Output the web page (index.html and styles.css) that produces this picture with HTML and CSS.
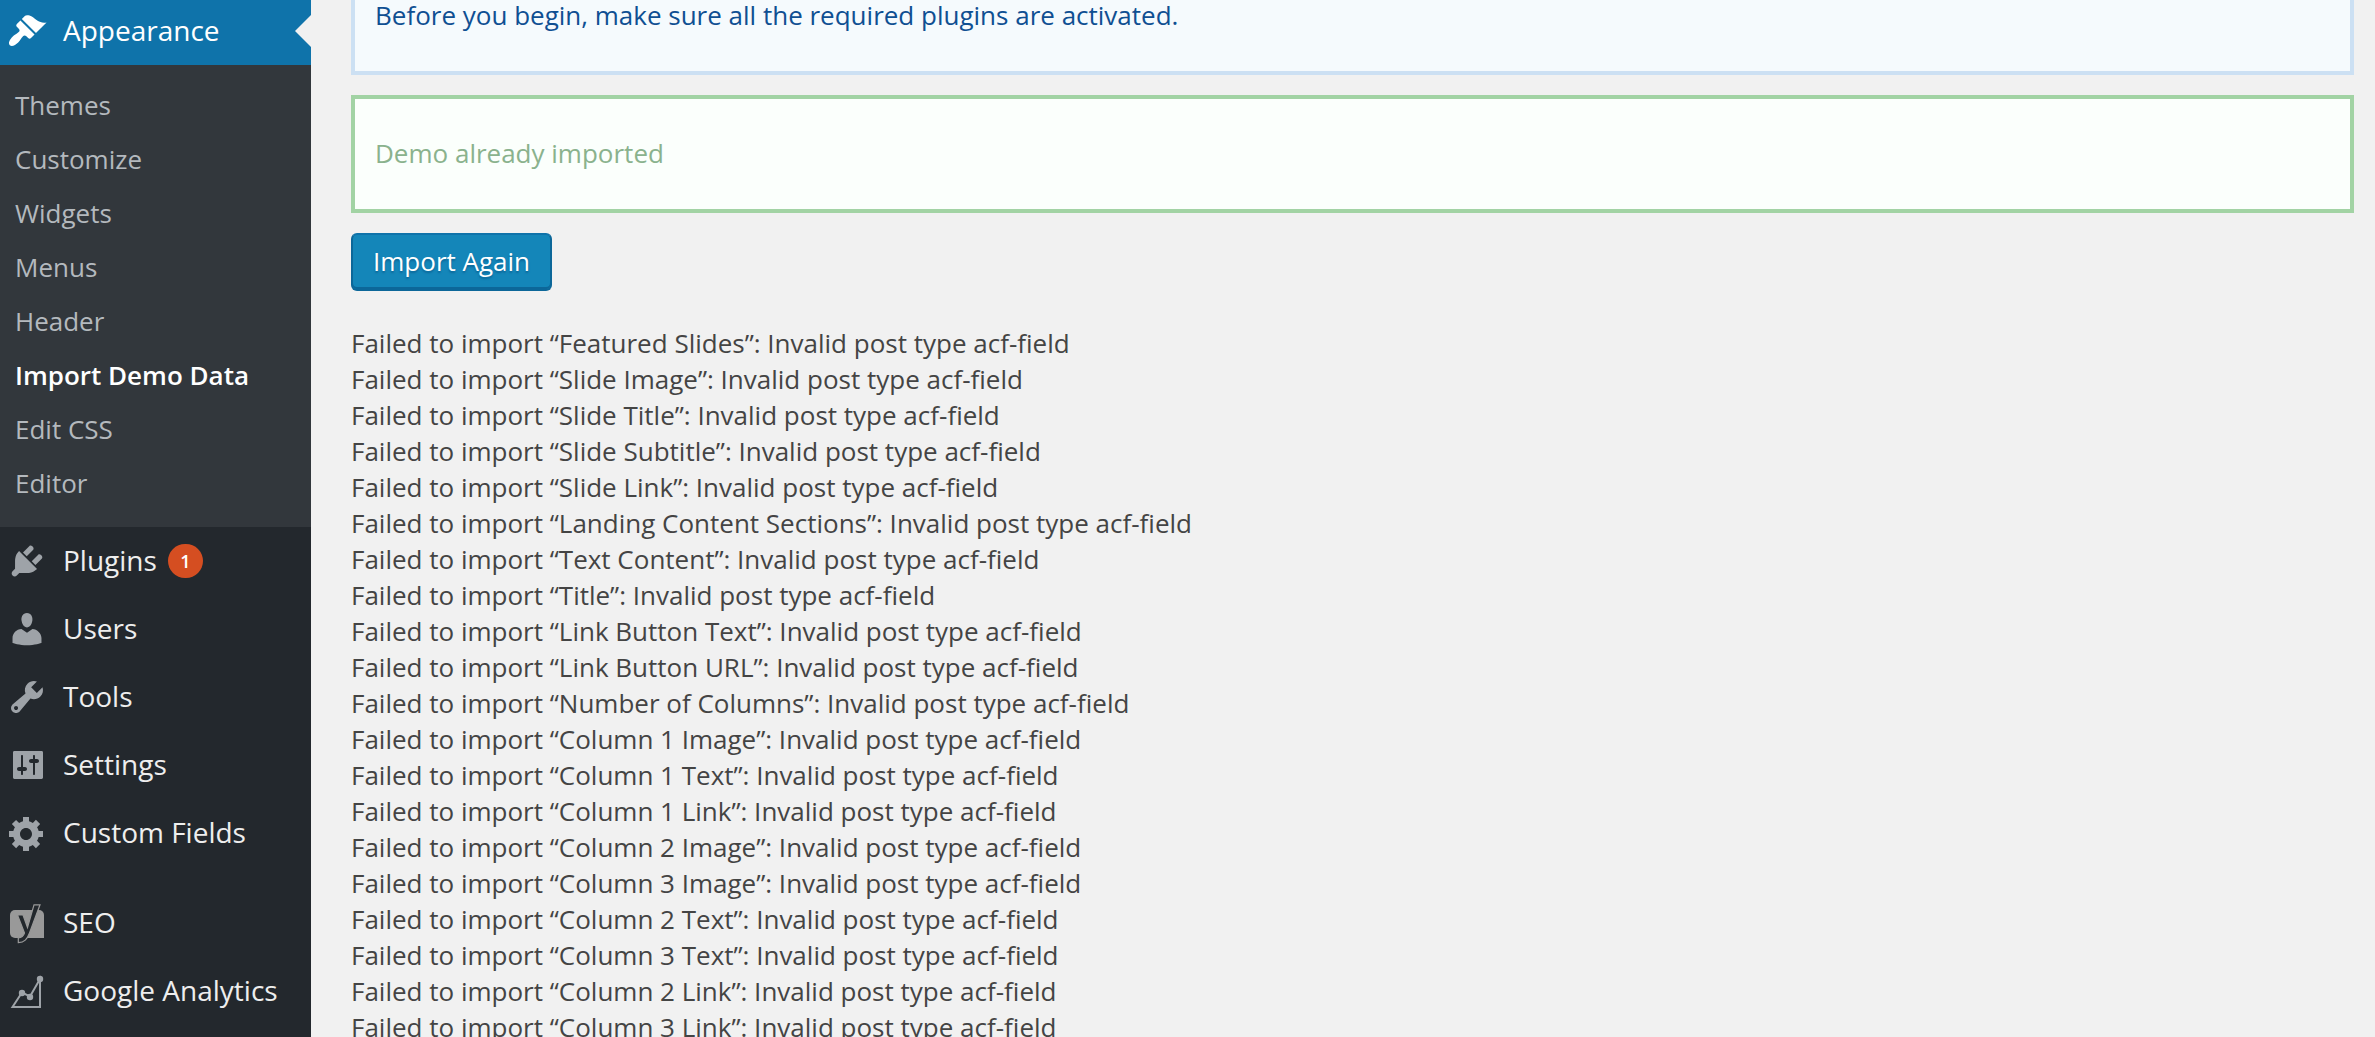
FILE: index.html
```html
<!DOCTYPE html>
<html lang="en">
<head>
<meta charset="utf-8">
<title>Import Demo Data</title>
<link rel="stylesheet" href="styles.css">
</head>
<body>
<div class="shell">
  <nav class="sidebar" aria-label="Main menu">
    <a class="menu-item menu-item-current" href="#">
      <svg class="icon" viewBox="0 0 20 20" aria-hidden="true"><path d="M14.48 11.06L7.41 3.99l1.5-1.5c.5-.56 2.3-.47 3.51.32 1.21.8 1.43 1.28 2.91 2.1 1.18.64 2.45 1.26 4.45.85zm-.71.71L6.7 4.7 4.93 6.47c-.39.39-.39 1.02 0 1.41l1.06 1.06c.39.39.39 1.03 0 1.42-.6.6-1.43 1.11-2.21 1.69-.35.26-.7.53-1.01.84C1.43 14.23.4 16.08 1.4 17.07c.99 1 2.84-.03 4.18-1.36.31-.31.58-.66.85-1.02.57-.78 1.08-1.61 1.69-2.21.39-.39 1.02-.39 1.41 0l1.06 1.06c.39.39 1.02.39 1.41 0z"/></svg>
      <span class="menu-label">Appearance</span>
    </a>
    <ul class="submenu">
      <li><a href="#">Themes</a></li>
      <li><a href="#">Customize</a></li>
      <li><a href="#">Widgets</a></li>
      <li><a href="#">Menus</a></li>
      <li><a href="#">Header</a></li>
      <li><a class="submenu-current" href="#" aria-current="page">Import Demo Data</a></li>
      <li><a href="#">Edit CSS</a></li>
      <li><a href="#">Editor</a></li>
    </ul>
    <a class="menu-item" href="#">
      <svg class="icon" viewBox="0 0 20 20" aria-hidden="true"><path d="M13.11 4.36L9.87 7.6 8 5.73l3.24-3.24c.35-.34 1.05-.2 1.56.32.52.51.66 1.21.31 1.55zm-8 1.77l.91-1.12 9.01 9.01-1.19.84c-.71.71-2.63 1.16-3.82 1.16H6.14L4.9 17.26c-.59.59-1.54.59-2.12 0-.59-.58-.59-1.53 0-2.12l1.24-1.24v-3.88c0-1.13.4-3.19 1.09-3.89zm7.26 3.97l3.24-3.24c.34-.35 1.04-.21 1.55.31.52.51.66 1.21.31 1.55l-3.24 3.25z"/></svg>
      <span class="menu-label">Plugins</span>
      <span class="badge">1</span>
    </a>
    <a class="menu-item" href="#">
      <svg class="icon" viewBox="0 0 20 20" aria-hidden="true"><path d="M10 9.25c-2.27 0-2.73-3.44-2.73-3.44C7 4.02 7.82 2 9.97 2c2.16 0 2.98 2.02 2.71 3.81 0 0-.41 3.44-2.68 3.44zm0 2.57L12.72 10c2.39 0 4.52 2.33 4.52 4.53v2.49s-3.65 1.13-7.24 1.13c-3.65 0-7.24-1.13-7.24-1.13v-2.49c0-2.25 1.94-4.48 4.47-4.48z"/></svg>
      <span class="menu-label">Users</span>
    </a>
    <a class="menu-item" href="#">
      <svg class="icon" viewBox="0 0 20 20" aria-hidden="true"><path d="M16.68 9.77c-1.34 1.34-3.3 1.67-4.95.99l-5.41 6.52c-.99.99-2.59.99-3.58 0s-.99-2.59 0-3.57l6.52-5.42c-.68-1.65-.35-3.61.99-4.95 1.28-1.28 3.12-1.62 4.72-1.06l-2.89 2.89 2.82 2.82 2.86-2.87c.53 1.58.18 3.39-1.08 4.65zM3.81 16.21c.4.39 1.04.39 1.43 0 .4-.4.4-1.04 0-1.43-.39-.4-1.03-.4-1.43 0-.39.39-.39 1.03 0 1.43z"/></svg>
      <span class="menu-label">Tools</span>
    </a>
    <a class="menu-item" href="#">
      <svg class="icon" viewBox="0 0 20 20" aria-hidden="true"><path d="M18 16.3V3.7c0-.4-.3-.7-.7-.7H3.7c-.4 0-.7.3-.7.7v12.6c0 .4.3.7.7.7h13.6c.4 0 .7-.3.7-.7zM8 11h1c.55 0 1 .45 1 1s-.45 1-1 1H8v1.5c0 .28-.22.5-.5.5s-.5-.22-.5-.5V13H6c-.55 0-1-.45-1-1s.45-1 1-1h1V5.500c0-.28.22-.5.5-.5s.5.22.5.5V11zm5-2h-1c-.55 0-1-.45-1-1s.45-1 1-1h1V5.500c0-.28.22-.5.5-.5s.5.22.5.5V7h1c.55 0 1 .45 1 1s-.45 1-1 1h-1v5.500c0 .28-.22.5-.5.5s-.5-.22-.5-.5V9z"/></svg>
      <span class="menu-label">Settings</span>
    </a>
    <a class="menu-item" href="#">
      <svg class="icon" viewBox="0 0 20 20" aria-hidden="true"><path d="M18 12h-2.18c-.17.7-.44 1.35-.81 1.93l1.54 1.54-2.1 2.1-1.54-1.54c-.58.36-1.23.63-1.91.79V19H8v-2.18c-.68-.16-1.33-.43-1.91-.79l-1.54 1.54-2.12-2.12 1.54-1.54c-.36-.58-.63-1.23-.79-1.91H1V9.03h2.17c.16-.7.44-1.35.8-1.94L2.43 5.55l2.1-2.1 1.54 1.54c.58-.37 1.24-.64 1.93-.81V2h3v2.18c.68.16 1.33.43 1.91.79l1.54-1.54 2.12 2.12-1.54 1.54c.36.59.64 1.24.8 1.94H18V12zm-8.5 1.5c1.66 0 3-1.34 3-3s-1.34-3-3-3-3 1.34-3 3 1.34 3 3 3z"/></svg>
      <span class="menu-label">Custom Fields</span>
    </a>
    <div class="separator"></div>
    <a class="menu-item" href="#">
      <svg class="icon" viewBox="0 0 40 40" aria-hidden="true"><path class="seo-plate" d="M8 7h24a5 5 0 0 1 5 5v23H8a5 5 0 0 1-5-5V12a5 5 0 0 1 5-5z"/><path class="seo-mark" d="M10.500 12h5.500l4.500 12.500L27 1.800h6L22.500 30c-2.500 6.500-5 9.300-11.200 9.700v-4.700c3.400-.5 5.200-2 6.200-5z"/></svg>
      <span class="menu-label">SEO</span>
    </a>
    <a class="menu-item" href="#">
      <svg class="icon" viewBox="0 0 40 40" aria-hidden="true"><path class="chart-line" d="M5.500 36L15 21.500l8 4L33 8v28z"/><circle cx="15" cy="22" r="3.200"/><circle cx="23" cy="26" r="3.200"/><circle cx="33" cy="8" r="3.200"/></svg>
      <span class="menu-label">Google Analytics</span>
    </a>
  </nav>
  <main class="content">
    <div class="notice notice-info"><p>Before you begin, make sure all the required plugins are activated.</p></div>
    <div class="notice notice-done"><p>Demo already imported</p></div>
    <button class="button" type="button">Import Again</button>
    <ul class="log">
      <li>Failed to import “Featured Slides”: Invalid post type acf-field</li>
      <li>Failed to import “Slide Image”: Invalid post type acf-field</li>
      <li>Failed to import “Slide Title”: Invalid post type acf-field</li>
      <li>Failed to import “Slide Subtitle”: Invalid post type acf-field</li>
      <li>Failed to import “Slide Link”: Invalid post type acf-field</li>
      <li>Failed to import “Landing Content Sections”: Invalid post type acf-field</li>
      <li>Failed to import “Text Content”: Invalid post type acf-field</li>
      <li>Failed to import “Title”: Invalid post type acf-field</li>
      <li>Failed to import “Link Button Text”: Invalid post type acf-field</li>
      <li>Failed to import “Link Button URL”: Invalid post type acf-field</li>
      <li>Failed to import “Number of Columns”: Invalid post type acf-field</li>
      <li>Failed to import “Column 1 Image”: Invalid post type acf-field</li>
      <li>Failed to import “Column 1 Text”: Invalid post type acf-field</li>
      <li>Failed to import “Column 1 Link”: Invalid post type acf-field</li>
      <li>Failed to import “Column 2 Image”: Invalid post type acf-field</li>
      <li>Failed to import “Column 3 Image”: Invalid post type acf-field</li>
      <li>Failed to import “Column 2 Text”: Invalid post type acf-field</li>
      <li>Failed to import “Column 3 Text”: Invalid post type acf-field</li>
      <li>Failed to import “Column 2 Link”: Invalid post type acf-field</li>
      <li>Failed to import “Column 3 Link”: Invalid post type acf-field</li>
    </ul>
  </main>
</div>
</body>
</html>
```
FILE: styles.css
```css
* {
  box-sizing: border-box;
}

html {
  overflow: hidden;
}

body {
  height: 100vh;
  margin: 0;
  overflow: hidden;
  background: #f1f1f1;
  color: #444;
  font-family: "Open Sans", sans-serif;
  font-size: 26px;
  line-height: 36px;
}

.shell {
  display: flex;
  margin-top: -3px;
}

.sidebar {
  flex: none;
  width: 311px;
  background: #23282d;
}

.menu-item {
  position: relative;
  display: flex;
  align-items: center;
  height: 68px;
  padding-left: 7px;
  color: #eee;
  font-size: 28px;
  text-decoration: none;
}

.menu-label {
  padding-bottom: 2px;
}

.menu-item-current {
  background: #0f73aa;
  color: #fff;
}

/* notch pointing from the content area into the open section */
.menu-item-current::after {
  content: "";
  position: absolute;
  right: 0;
  top: 18px;
  border: 16px solid transparent;
  border-left-width: 0;
  border-right-color: #f1f1f1;
}

.icon {
  flex: none;
  width: 40px;
  height: 40px;
  margin-right: 16px;
  overflow: visible;
  fill: #9ea3a8;
}

.menu-item-current .icon {
  fill: #fff;
}

.seo-plate {
  fill: #999;
}

.seo-mark {
  fill: #23282d;
  stroke: #999;
  stroke-width: 1.2;
}

.chart-line {
  fill: none;
  stroke: #9ea3a8;
  stroke-width: 2;
}

.badge {
  width: 35px;
  height: 34px;
  margin-left: 11px;
  border-radius: 17px;
  background: #d54e21;
  color: #fff;
  font-size: 18px;
  font-weight: 600;
  line-height: 34px;
  text-align: center;
}

.submenu {
  margin: 0;
  padding: 14px 0 16px;
  background: #32373c;
  list-style: none;
}

.submenu a {
  display: block;
  padding: 8px 15px 10px;
  color: #b4b9be;
  text-decoration: none;
}

.submenu .submenu-current {
  color: #fff;
  font-weight: 600;
}

.separator {
  height: 22px;
}

.content {
  flex: 1;
  padding: 0 21px 0 40px;
}

.notice {
  margin-bottom: 20px;
  padding: 36px 20px 38px;
  border: 4px solid;
}

.notice p {
  margin: 0;
}

.notice-info {
  padding-top: 0;
  border-top: 0;
  border-color: #cce0f3;
  background: #f5fafd;
  color: #0f4f92;
}

.notice-done {
  border-color: #a2d3a4;
  background: #fbfffc;
  color: #8ab28d;
}

.button {
  display: block;
  height: 58px;
  margin: 0 0 34px;
  padding: 0 20px 2px;
  border: 2px solid #0f73aa;
  border-color: #0f73aa #0c6799 #0c6799;
  border-radius: 6px;
  background: #1486b9;
  box-shadow: inset 0 -2px 0 #0c6799;
  color: #fff;
  font: inherit;
  text-shadow: 0 2px 2px #0c6799;
}

.log {
  margin: 0;
  padding: 0;
  list-style: none;
}
```
